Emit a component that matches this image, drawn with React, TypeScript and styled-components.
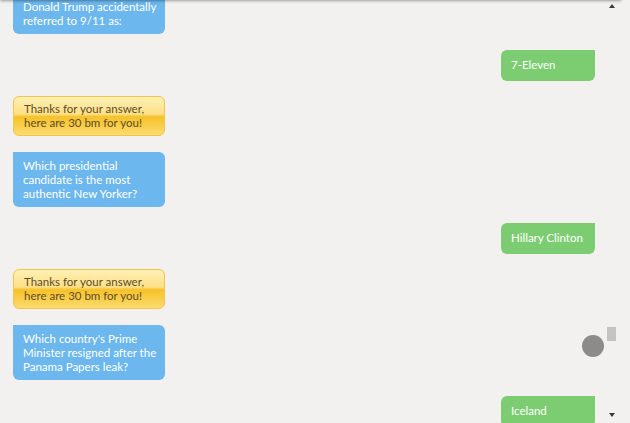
import React from "react";
import styled, {createGlobalStyle} from "styled-components";

type Msg =
  | {kind: "question"; text: string[]}
  | {kind: "answer"; text: string}
  | {kind: "reward"; text: string[]};

const REWARD = ["Thanks for your answer,", "here are 30 bm for you!"];

const messages: Msg[] = [
  {kind: "question", text: ["Finish the sentence:", "Donald Trump accidentally", "referred to 9/11 as:"]},
  {kind: "answer", text: "7-Eleven"},
  {kind: "reward", text: REWARD},
  {kind: "question", text: ["Which presidential", "candidate is the most", "authentic New Yorker?"]},
  {kind: "answer", text: "Hillary Clinton"},
  {kind: "reward", text: REWARD},
  {kind: "question", text: ["Which country's Prime", "Minister resigned after the", "Panama Papers leak?"]},
  {kind: "answer", text: "Iceland"},
];

const GlobalStyle = createGlobalStyle`
  html, body {
    margin: 0;
    padding: 0;
    background: #f2f1f0;
  }
  body {
    font-family: Lato, "Open Sans", sans-serif;
  }
`;

const Screen = styled.div`
  position: relative;
  width: 630px;
  height: 423px;
  overflow: hidden;
  display: flex;
  background: #f2f1f0;

  &::before {
    content: "";
    position: absolute;
    left: 0;
    top: -4px;
    width: 621px;
    height: 4px;
    box-shadow: 0 1px 3px rgba(0, 0, 0, 0.35);
    background: #e8e8e8;
  }
`;

const Feed = styled.div`
  flex: 1;
  display: flex;
  flex-direction: column;
  gap: 15.7px;
  padding: 0 8px 0 13px;
  margin-top: -21px;
`;

const Row = styled.div<{$right?: boolean}>`
  display: flex;
  justify-content: ${(p) => (p.$right ? "flex-end" : "flex-start")};
`;

const Bubble = styled.div`
  font-size: 11.5px;
  line-height: 14px;
  letter-spacing: 0;
  box-sizing: border-box;
  white-space: nowrap;
`;

const Question = styled(Bubble)`
  width: 152px;
  padding: 6.5px 10px;
  background: #6cb7ee;
  color: #ffffff;
  border-radius: 0 6px 6px 6px;
`;

const Answer = styled(Bubble)`
  width: 94px;
  padding: 8.5px 10px;
  background: #7ccd72;
  color: #ffffff;
  border-radius: 6px 0 6px 6px;
`;

const Reward = styled(Bubble)`
  width: 152px;
  padding: 5px 10px;
  color: #5e4c26;
  border: 1px solid #efc649;
  border-radius: 6px;
  background: linear-gradient(
    to bottom,
    #fff0b4 0%,
    #fde088 45%,
    #f6c22a 52%,
    #f9cd48 75%,
    #fcdb72 100%
  );
`;

const ScrollBar = styled.div`
  width: 17px;
  margin-right: 10px;
  display: flex;
  flex-direction: column;
  align-items: center;
`;

const Arrow = styled.div<{$down?: boolean}>`
  width: 0;
  height: 0;
  margin: ${(p) => (p.$down ? "0 0 6px" : "4px 0 0")};
  border-left: 3.5px solid transparent;
  border-right: 3.5px solid transparent;
  ${(p) =>
    p.$down
      ? "border-top: 4px solid #3a3a3a;"
      : "border-bottom: 4px solid #3a3a3a;"}
`;

const Track = styled.div`
  flex: 1;
  width: 100%;
  display: flex;
  flex-direction: column;
  align-items: center;
`;

const Thumb = styled.div`
  width: 9px;
  height: 14px;
  margin-top: 319px;
  background: #c4c4c4;
`;

const TouchDot = styled.div`
  position: absolute;
  left: 582px;
  top: 335px;
  width: 22px;
  height: 22px;
  border-radius: 50%;
  background: #8b8b8b;
`;

export default function App() {
  return (
    <>
      <GlobalStyle />
      <Screen>
        <Feed>
          {messages.map((m, i) => {
            if (m.kind === "answer")
              return (
                <Row key={i} $right>
                  <Answer>{m.text}</Answer>
                </Row>
              );
            const Box = m.kind === "question" ? Question : Reward;
            return (
              <Row key={i}>
                <Box>
                  {m.text.map((line, j) => (
                    <div key={j}>{line}</div>
                  ))}
                </Box>
              </Row>
            );
          })}
        </Feed>
        <ScrollBar>
          <Arrow />
          <Track>
            <Thumb />
          </Track>
          <Arrow $down />
        </ScrollBar>
        <TouchDot />
      </Screen>
    </>
  );
}
